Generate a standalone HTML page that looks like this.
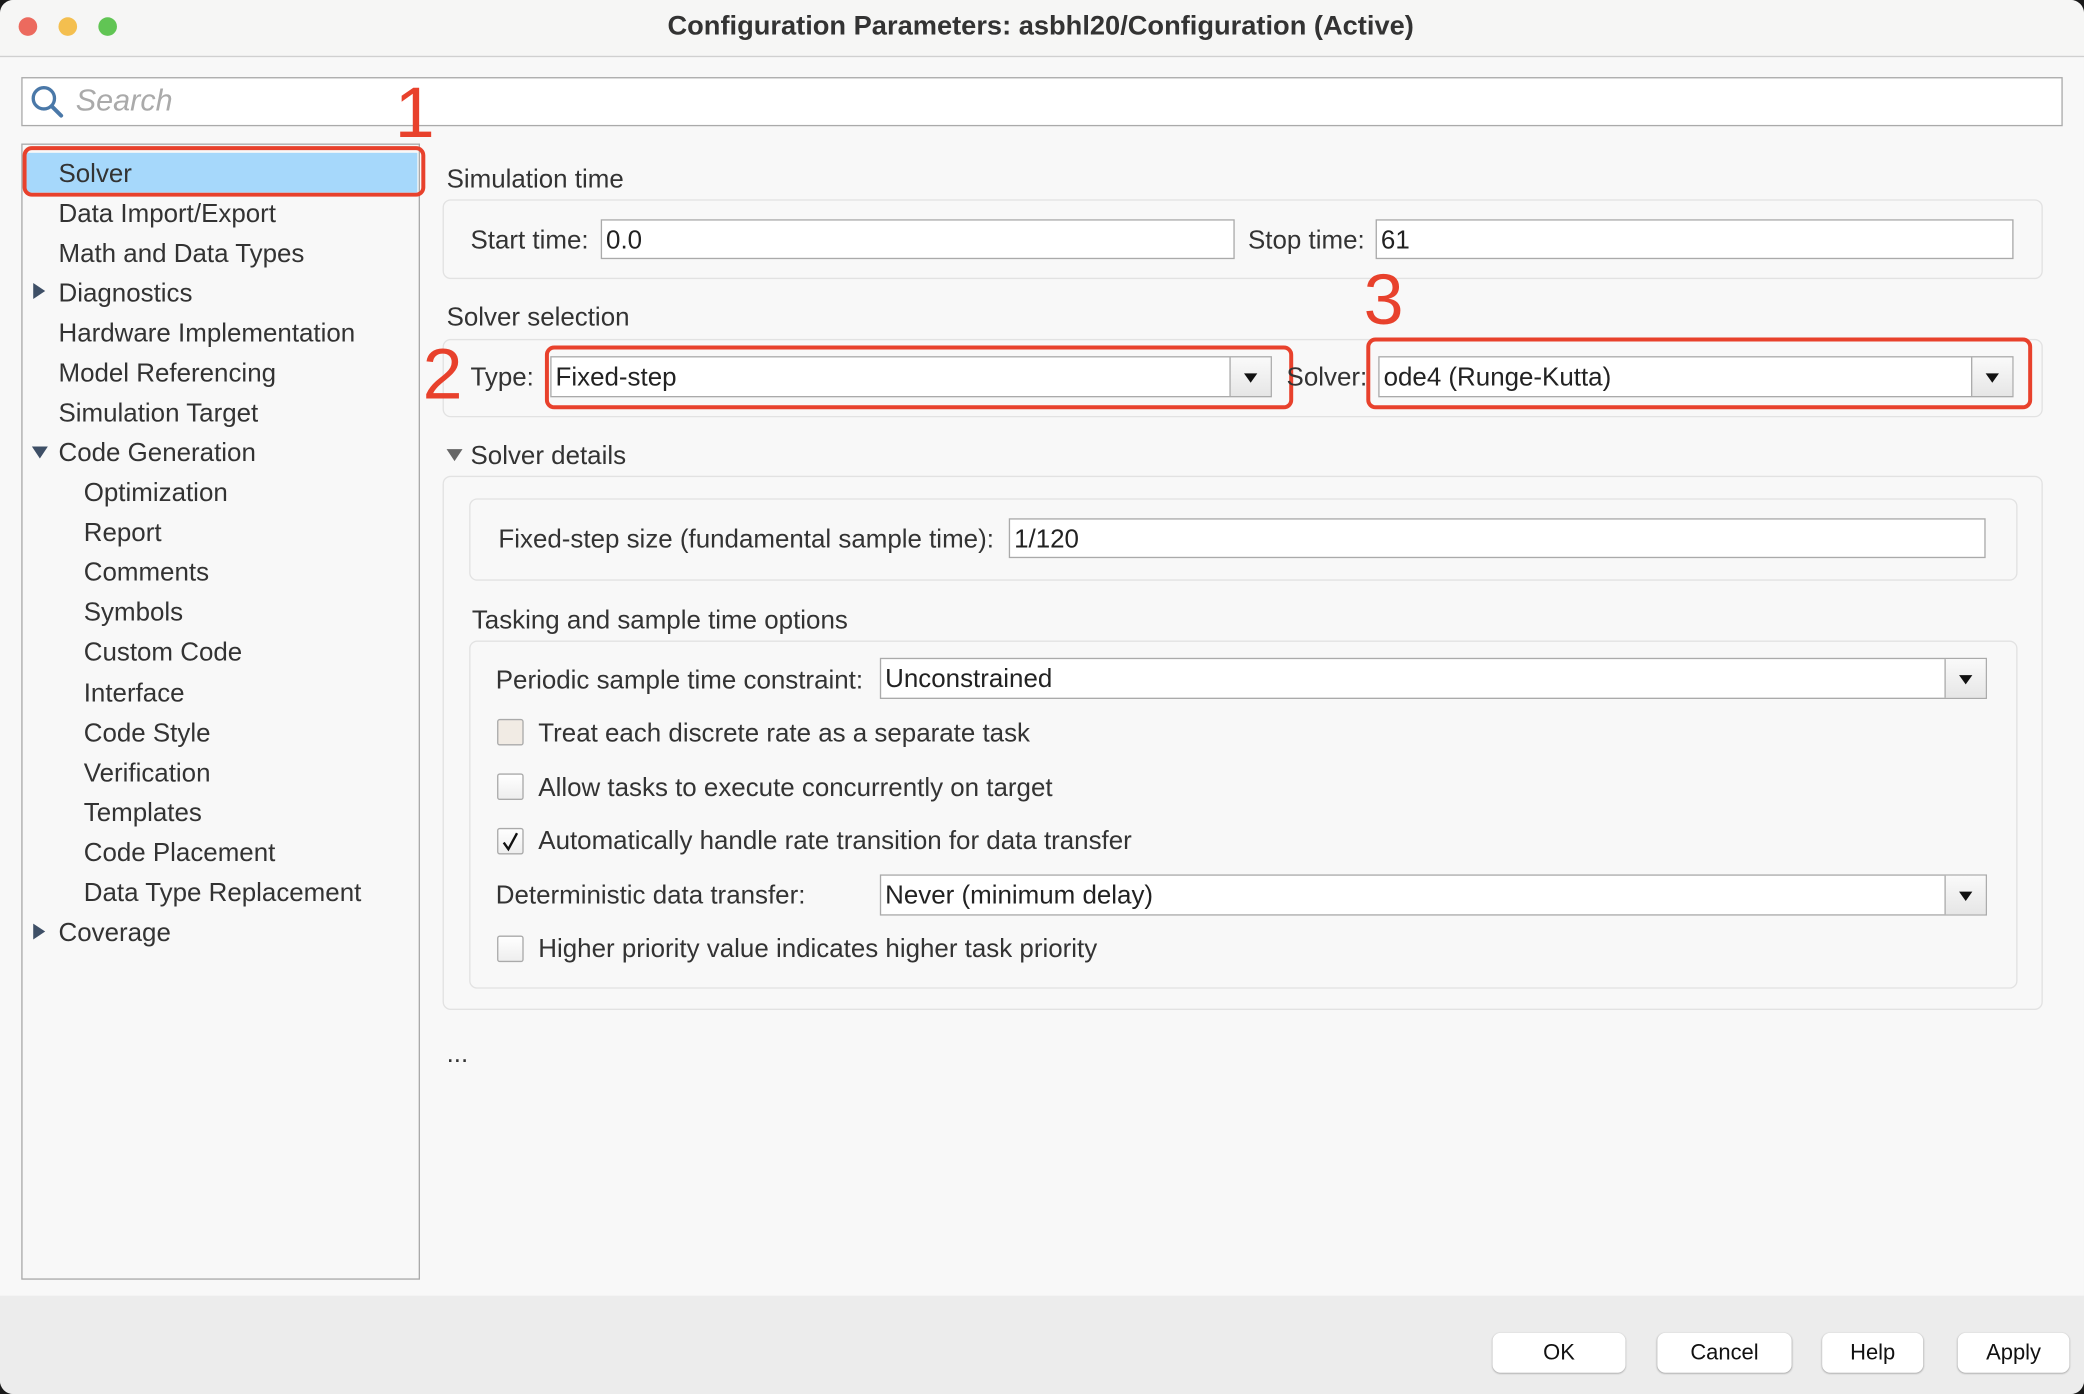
<!DOCTYPE html>
<html><head><meta charset="utf-8"><style>
html,body{margin:0;padding:0;background:#1a1a1a;width:2084px;height:1394px;overflow:hidden}
#w{position:absolute;left:0;top:0;width:1568px;height:1049px;transform:scale(1.32908,1.32888);transform-origin:0 0;background:#f8f8f8;border-radius:10px;overflow:hidden;font-family:"Liberation Sans",Arial,sans-serif;color:#333}
.a{position:absolute}
.t{position:absolute;font-size:19.5px;letter-spacing:0;white-space:nowrap;line-height:22px}
.box{position:absolute;border:1px solid #e2e2e2;border-radius:6px}
.in{position:absolute;background:#fff;border:1.5px solid #aaa;box-sizing:border-box}
.in span{position:absolute;left:3px;top:4px;font-size:19.5px;line-height:22px;color:#222;white-space:nowrap}
.dd{position:absolute;right:0;top:0;bottom:0;width:30px;border-left:1.5px solid #aaa;background:linear-gradient(#fafafa,#e6e6e6)}
.dd:after{content:"";position:absolute;left:10px;top:12px;border-left:5px solid transparent;border-right:5px solid transparent;border-top:7px solid #111}
.red{position:absolute;border:3px solid #e8412c;border-radius:7px;box-sizing:border-box}
.num{position:absolute;color:#e8412c;font-size:54px;line-height:54px;font-weight:300}
.cb{position:absolute;width:20px;height:20px;border:1.5px solid #aaa;background:linear-gradient(#fff,#eee);box-sizing:border-box;border-radius:2px}
.btn{position:absolute;top:1003px;height:30px;background:#fff;border-radius:6px;box-shadow:0 0.5px 1.5px rgba(0,0,0,.35);font-size:16.5px;text-align:center;line-height:31px;color:#111}
</style></head><body><div id="w">
<div class="a" style="left:0;top:0;width:1568px;height:42px;background:#f6f6f5;border-bottom:1px solid #d0d0d0"></div>
<div class="a" style="left:14px;top:13px;width:14px;height:14px;border-radius:50%;background:#ec6a5e"></div>
<div class="a" style="left:44px;top:13px;width:14px;height:14px;border-radius:50%;background:#f4bf4f"></div>
<div class="a" style="left:74px;top:13px;width:14px;height:14px;border-radius:50%;background:#61c554"></div>
<div class="t" style="left:0;width:1566px;text-align:center;top:9px;font-weight:bold;font-size:20.5px;color:#333">Configuration Parameters: asbhl20/Configuration (Active)</div>
<div class="a" style="left:0;top:975px;width:1568px;height:74px;background:#ececec"></div>
<div class="a" style="left:16px;top:58px;width:1536px;height:37px;background:#fff;border:1px solid #aaa;box-sizing:border-box"></div>
<svg class="a" style="left:22px;top:63px" width="28" height="28"><circle cx="11" cy="11" r="8" fill="none" stroke="#4a78a8" stroke-width="2.5"/><line x1="17" y1="17" x2="24" y2="24" stroke="#4a78a8" stroke-width="3" stroke-linecap="round"/></svg>
<div class="t" style="left:57px;top:64px;font-size:23px;font-style:italic;color:#aaa">Search</div>
<div class="a" style="left:16px;top:108px;width:300px;height:855px;border:1px solid #aaa;box-sizing:border-box;background:#f8f8f8"></div>
<div class="a" style="left:20px;top:115px;width:294px;height:30px;background:#a6d8fb"></div>
<div class="red" style="left:17px;top:110px;width:303px;height:38px"></div>
<div class="num" style="left:297px;top:58px">1</div>
<div class="t" style="left:44px;top:120px">Solver</div>
<div class="t" style="left:44px;top:150px">Data Import/Export</div>
<div class="t" style="left:44px;top:180px">Math and Data Types</div>
<div class="a" style="left:25px;top:213px;border-top:6px solid transparent;border-bottom:6px solid transparent;border-left:9px solid #3e4f66"></div>
<div class="t" style="left:44px;top:210px">Diagnostics</div>
<div class="t" style="left:44px;top:240px">Hardware Implementation</div>
<div class="t" style="left:44px;top:270px">Model Referencing</div>
<div class="t" style="left:44px;top:300px">Simulation Target</div>
<div class="a" style="left:24px;top:336px;border-left:6px solid transparent;border-right:6px solid transparent;border-top:9px solid #3e4f66"></div>
<div class="t" style="left:44px;top:330px">Code Generation</div>
<div class="t" style="left:63px;top:360px">Optimization</div>
<div class="t" style="left:63px;top:390px">Report</div>
<div class="t" style="left:63px;top:420px">Comments</div>
<div class="t" style="left:63px;top:450px">Symbols</div>
<div class="t" style="left:63px;top:480px">Custom Code</div>
<div class="t" style="left:63px;top:511px">Interface</div>
<div class="t" style="left:63px;top:541px">Code Style</div>
<div class="t" style="left:63px;top:571px">Verification</div>
<div class="t" style="left:63px;top:601px">Templates</div>
<div class="t" style="left:63px;top:631px">Code Placement</div>
<div class="t" style="left:63px;top:661px">Data Type Replacement</div>
<div class="a" style="left:25px;top:695px;border-top:6px solid transparent;border-bottom:6px solid transparent;border-left:9px solid #3e4f66"></div>
<div class="t" style="left:44px;top:691px">Coverage</div>

<div class="t" style="left:336px;top:124px">Simulation time</div>
<div class="box" style="left:333px;top:150px;width:1202px;height:58px"></div>
<div class="t" style="left:354px;top:170px">Start time:</div>
<div class="in" style="left:452px;top:165px;width:477px;height:30px"><span>0.0</span></div>
<div class="t" style="left:939px;top:170px">Stop time:</div>
<div class="in" style="left:1035px;top:165px;width:480px;height:30px"><span>61</span></div>

<div class="t" style="left:336px;top:228px">Solver selection</div>
<div class="box" style="left:333px;top:255px;width:1202px;height:57px"></div>
<div class="t" style="left:354px;top:273px">Type:</div>
<div class="in" style="left:414px;top:268px;width:543px;height:31px"><span>Fixed-step</span><div class="dd"></div></div>
<div class="red" style="left:410px;top:260px;width:563px;height:48px"></div>
<div class="num" style="left:318px;top:255px">2</div>
<div class="t" style="left:968px;top:273px">Solver:</div>
<div class="in" style="left:1037px;top:268px;width:478px;height:31px"><span>ode4 (Runge-Kutta)</span><div class="dd"></div></div>
<div class="red" style="left:1028px;top:254px;width:501px;height:54px"></div>
<div class="num" style="left:1026px;top:199px">3</div>

<div class="a" style="left:336px;top:338px;border-left:6px solid transparent;border-right:6px solid transparent;border-top:9px solid #666"></div>
<div class="t" style="left:354px;top:332px">Solver details</div>
<div class="box" style="left:333px;top:358px;width:1202px;height:400px"></div>
<div class="box" style="left:353px;top:375px;width:1163px;height:60px"></div>
<div class="t" style="left:375px;top:395px">Fixed-step size (fundamental sample time):</div>
<div class="in" style="left:759px;top:390px;width:735px;height:30px"><span>1/120</span></div>
<div class="t" style="left:355px;top:456px">Tasking and sample time options</div>
<div class="box" style="left:353px;top:482px;width:1163px;height:260px"></div>
<div class="t" style="left:373px;top:501px">Periodic sample time constraint:</div>
<div class="in" style="left:662px;top:495px;width:833px;height:31px"><span>Unconstrained</span><div class="dd"></div></div>
<div class="cb" style="left:374px;top:541px;background:#f1ebe4"></div>
<div class="t" style="left:405px;top:541px">Treat each discrete rate as a separate task</div>
<div class="cb" style="left:374px;top:582px"></div>
<div class="t" style="left:405px;top:582px">Allow tasks to execute concurrently on target</div>
<div class="cb" style="left:374px;top:623px"></div>
<svg class="a" style="left:374px;top:623px" width="20" height="20"><path d="M5 11 L8.5 16 L15 4" fill="none" stroke="#111" stroke-width="1.8"/></svg>
<div class="t" style="left:405px;top:622px">Automatically handle rate transition for data transfer</div>
<div class="t" style="left:373px;top:663px">Deterministic data transfer:</div>
<div class="in" style="left:662px;top:658px;width:833px;height:31px"><span>Never (minimum delay)</span><div class="dd"></div></div>
<div class="cb" style="left:374px;top:704px"></div>
<div class="t" style="left:405px;top:703px">Higher priority value indicates higher task priority</div>
<div class="t" style="left:336px;top:782px">...</div>

<div class="btn" style="left:1123px;width:100px">OK</div>
<div class="btn" style="left:1247px;width:101px">Cancel</div>
<div class="btn" style="left:1371px;width:76px">Help</div>
<div class="btn" style="left:1473px;width:84px">Apply</div>
</div></body></html>
